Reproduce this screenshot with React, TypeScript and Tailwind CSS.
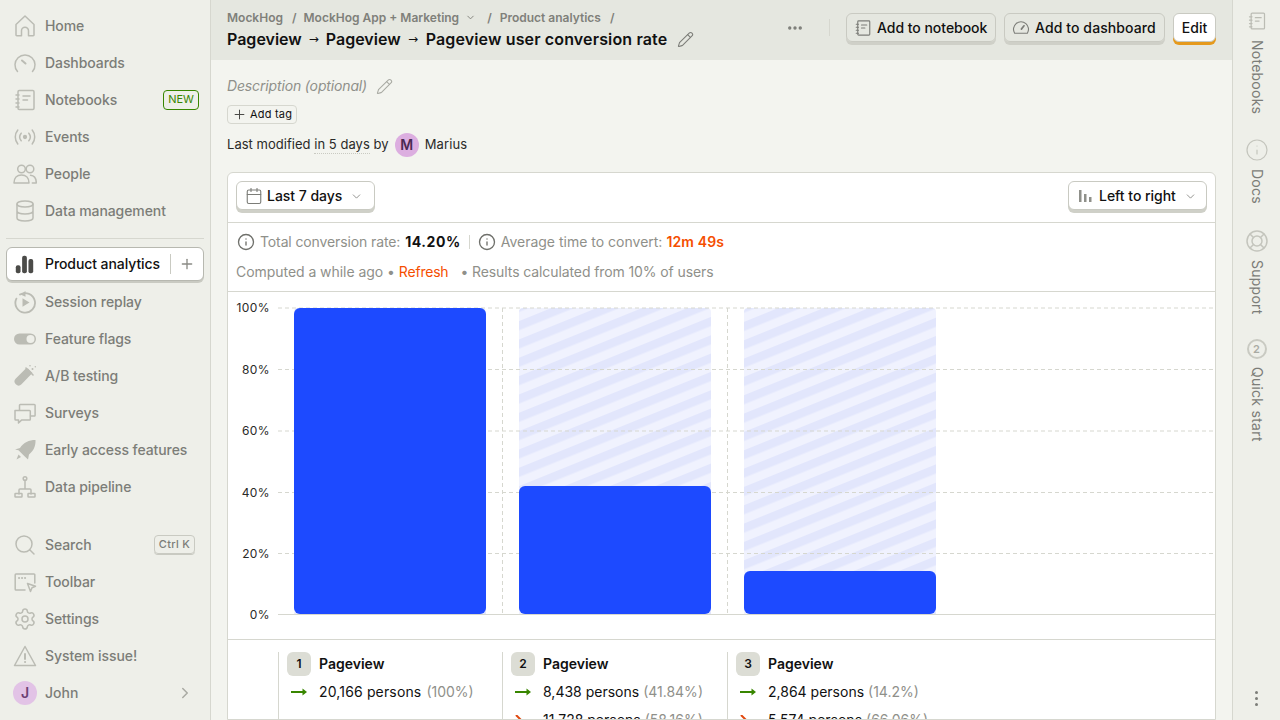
import * as React from "react";
import { ChevronDown, ChevronRight, Plus, Settings, Search, Pencil, Calendar, Info, MoreHorizontal } from "lucide-react";

type IconProps = { className?: string };

function Svg({ className, children }: IconProps & { children: React.ReactNode }) {
  return (
    <svg
      viewBox="0 0 24 24"
      fill="none"
      stroke="currentColor"
      strokeWidth={1.5}
      strokeLinecap="round"
      strokeLinejoin="round"
      className={className}
    >
      {children}
    </svg>
  );
}

const HomeIcon = (p: IconProps) => (
  <Svg {...p}>
    <path d="M3 21V10.500L12 2l9 8.500V21a.8.8 0 0 1-.8.8H15.500v-5a3.500 3.500 0 0 0-7 0v5H3.800A.8.8 0 0 1 3 21z" />
  </Svg>
);
const GaugeIcon = (p: IconProps) => (
  <Svg {...p}>
    <path d="M4.500 20.500a10 10 0 1 1 15 0" />
    <path d="M9 9.500l3.500 3" strokeWidth={2} />
  </Svg>
);
const WideGaugeIcon = (p: IconProps) => (
  <Svg {...p}>
    <path d="M3.500 19a10 10 0 1 1 17 0z" />
    <path d="M16 9l-3.500 4.500" strokeWidth={2.200} />
  </Svg>
);
const NotebookIcon = (p: IconProps) => (
  <Svg {...p}>
    <rect x="5" y="2.500" width="16" height="19" rx="1.200" />
    <path d="M3 7h3M3 11h3M3 15h3M3 19h3M10 8h7M10 12h4.500" />
  </Svg>
);
const EventsIcon = (p: IconProps) => (
  <Svg {...p}>
    <circle cx="12" cy="12" r="1.400" fill="currentColor" />
    <path d="M8.200 8.200a6 6 0 0 0 0 7.600M15.800 8.200a6 6 0 0 1 0 7.600M4.800 5a11 11 0 0 0 0 14M19.200 5a11 11 0 0 1 0 14" />
  </Svg>
);
const PeopleIcon = (p: IconProps) => (
  <Svg {...p}>
    <circle cx="8.500" cy="7" r="3.800" />
    <circle cx="17" cy="7" r="3.800" />
    <path d="M1 21c0-5 3-8 7.500-8s7.500 3 7.500 8H1z" />
    <path d="M17.500 13.200c3.500.3 5.800 3 5.800 7.800h-4" />
  </Svg>
);
const DatabaseIcon = (p: IconProps) => (
  <Svg {...p}>
    <ellipse cx="12" cy="5" rx="8" ry="3" />
    <path d="M4 5v14c0 1.700 3.600 3 8 3s8-1.300 8-3V5M4 12c0 1.700 3.600 3 8 3s8-1.300 8-3" />
  </Svg>
);
const BarsIcon = ({ className }: IconProps) => (
  <svg viewBox="0 0 24 24" fill="currentColor" className={className}>
    <rect x="1" y="13" width="6" height="10" rx="2.500" />
    <rect x="9" y="1" width="6" height="22" rx="2.500" />
    <rect x="17" y="5" width="6" height="18" rx="2.500" />
  </svg>
);
const ReplayIcon = ({ className }: IconProps) => (
  <svg viewBox="0 0 24 24" className={className}>
    <path d="M7 4.600a9.800 9.800 0 1 1-3.600 4" fill="none" stroke="currentColor" strokeWidth="1.800" strokeLinecap="round" />
    <path d="M12.500 1l-5 3.400 5 2.400z" fill="currentColor" />
    <path d="M9.500 8.200l7 4.300-7 4.300z" fill="currentColor" />
  </svg>
);
const ToggleIcon = ({ className }: IconProps) => (
  <svg viewBox="0 0 24 24" className={className}>
    <rect x="1" y="6.500" width="22" height="11" rx="5.500" fill="currentColor" />
    <circle cx="17.500" cy="12" r="4" fill="#eeefe9" />
  </svg>
);
const TubeIcon = ({ className }: IconProps) => (
  <svg viewBox="0 0 24 24" fill="currentColor" className={className}>
    <path d="M15 4.500l4.500 4.500-1.300 1.300-9.700 9.900a4 4 0 0 1-5.700-5.700l9.800-9.800z" />
    <path d="M13 4l7 7" stroke="currentColor" strokeWidth="1.600" strokeLinecap="round" />
    <circle cx="19.500" cy="5" r="1" />
    <circle cx="17" cy="1.800" r=".8" />
    <circle cx="22.300" cy="2.800" r=".7" />
  </svg>
);
const SurveysIcon = (p: IconProps) => (
  <Svg {...p}>
    <path d="M2 9.500h14.500a.8.8 0 0 1 .8.800v8a.8.8 0 0 1-.8.800H8.500L5.500 22v-2.900H2.800a.8.8 0 0 1-.8-.8z" />
    <path d="M6.500 9V4.300a.8.8 0 0 1 .8-.8h14a.8.8 0 0 1 .8.800v10a.8.8 0 0 1-.8.800h-3.800" />
  </Svg>
);
const RocketIcon = ({ className }: IconProps) => (
  <svg viewBox="0 0 24 24" fill="currentColor" className={className}>
    <path d="M22.500 2c.3 6-2 11-6.500 14.500l-1 5-3.500-3.200-6-6L2 11.500l5-1.500C10.500 4.500 16 2 22.500 2z" />
    <path d="M5.500 16.500l2.500 2.500-4.500 2.500z" />
  </svg>
);
const PipelineIcon = (p: IconProps) => (
  <Svg {...p}>
    <circle cx="12" cy="3.500" r="1.800" />
    <path d="M12 5.500v8M6 19v-4a1 1 0 0 1 1-1h10a1 1 0 0 1 1 1v4" />
    <rect x="2" y="18.500" width="7" height="3.500" rx=".5" />
    <rect x="15" y="18.500" width="7" height="3.500" rx=".5" />
  </Svg>
);
const ToolbarIcon = (p: IconProps) => (
  <Svg {...p}>
    <path d="M12 20H3a.8.8 0 0 1-.8-.8V4.800A.8.8 0 0 1 3 4h18a.8.8 0 0 1 .8.800V13" />
    <path d="M6 8h.1M9 8h.1M12 8h.1" strokeWidth={2} />
    <path d="M14.500 13.500l8 2.800-3.500 1.500-1.500 3.700z" />
  </Svg>
);
const WarningIcon = (p: IconProps) => (
  <Svg {...p}>
    <path d="M12 2.500L22.500 21.500h-21z" />
    <path d="M12 10v5" strokeWidth={2} />
    <path d="M12 18h.1" strokeWidth={2} />
  </Svg>
);
const SupportIcon = (p: IconProps) => (
  <Svg {...p}>
    <circle cx="12" cy="12" r="10" />
    <circle cx="12" cy="12" r="5" />
    <path d="M5 5l3.500 3.500M19 5l-3.500 3.500M5 19l3.500-3.500M19 19l-3.500-3.500" />
  </Svg>
);

function NavItem({
  icon: Icon,
  label,
  right,
}: {
  icon: React.ComponentType<IconProps>;
  label: string;
  right?: React.ReactNode;
}) {
  return (
    <div className="flex h-[37px] items-center pl-[13px] pr-[11px]">
      <span className="flex w-[24px] shrink-0 items-center justify-center text-[#bbbcb4]">
        <Icon className="h-[24px] w-[24px] shrink-0" />
      </span>
      <span className="ml-[8px] flex-1 text-sm font-[450] tracking-[-.08px] text-[#7c7d78]">{label}</span>
      {right}
    </div>
  );
}

function Sidebar() {
  return (
    <aside className="flex h-full w-[211px] shrink-0 flex-col border-r border-[#d6d7cf] bg-[#eeefe9] pt-[7px]">
      <NavItem icon={HomeIcon} label="Home" />
      <NavItem icon={GaugeIcon} label="Dashboards" />
      <NavItem
        icon={NotebookIcon}
        label="Notebooks"
        right={
          <span className="flex h-[20px] w-[36px] items-center justify-center rounded border border-[#388600] text-[11px] text-[#388600]">
            NEW
          </span>
        }
      />
      <NavItem icon={EventsIcon} label="Events" />
      <NavItem icon={PeopleIcon} label="People" />
      <NavItem icon={DatabaseIcon} label="Data management" />
      <div className="mx-[6px] mt-[9px] mb-[8px] border-t border-[#d6d7cf]" />
      <div className="mx-[6px] flex h-[34px] items-center rounded-md border border-[#b7b8b0] bg-white pl-[8px] shadow-[0_2px_0_#c9cac2]">
        <BarsIcon className="h-[19px] w-[19px] text-[#4b4b48]" />
        <span className="ml-[11px] text-sm font-[450] tracking-[-.08px] text-[#111]">Product analytics</span>
        <span className="ml-[10px] h-[20px] border-l border-[#c9cac2]" />
        <Plus className="ml-[8px] h-[16px] w-[16px] text-[#8a8b85]" strokeWidth={2} />
      </div>
      <div className="h-[2px]" />
      <NavItem icon={ReplayIcon} label="Session replay" />
      <NavItem icon={ToggleIcon} label="Feature flags" />
      <NavItem icon={TubeIcon} label="A/B testing" />
      <NavItem icon={SurveysIcon} label="Surveys" />
      <NavItem icon={RocketIcon} label="Early access features" />
      <NavItem icon={PipelineIcon} label="Data pipeline" />
      <div className="h-[21px]" />
      <NavItem
        icon={(p) => <Search {...p} strokeWidth={1.500} />}
        label="Search"
        right={
          <span className="mr-[4px] flex h-[19px] items-center rounded border border-[#c9cac2] px-[4px] text-[11px] font-medium tracking-wide text-[#7c7d78] shadow-[0_1px_0_#c9cac2]">
            Ctrl K
          </span>
        }
      />
      <NavItem icon={ToolbarIcon} label="Toolbar" />
      <NavItem icon={(p) => <Settings {...p} strokeWidth={1.500} />} label="Settings" />
      <NavItem icon={WarningIcon} label="System issue!" />
      <div className="flex h-[37px] items-center pl-[13px] pr-[16px]">
        <span className="flex h-[24px] w-[24px] items-center justify-center rounded-full bg-[#e2c3e6] text-sm font-semibold text-[#6c3f73]">
          J
        </span>
        <span className="ml-[8px] flex-1 text-sm font-[450] text-[#7c7d78]">John</span>
        <ChevronRight className="h-[18px] w-[18px] text-[#a9aaa3]" strokeWidth={2} />
      </div>
    </aside>
  );
}

function RaisedButton({ children, className = "" }: { children: React.ReactNode; className?: string }) {
  return (
    <div
      className={`flex h-[29px] items-center rounded-md border border-[#c9cac2] pt-[1px] text-sm font-medium tracking-[-.03px] text-[#111] shadow-[0_3px_0_#cfd0c8] ${className}`}
    >
      {children}
    </div>
  );
}

function Header() {
  return (
    <header className="flex h-[60px] shrink-0 items-start bg-[#e5e7e0] pl-[16px] pr-[16px]">
      <div className="flex-1 pt-[10px]">
        <div className="flex h-[15px] items-center text-xs font-semibold text-[#7f807a]">
          <span>MockHog</span>
          <span className="ml-[9px] mr-[7px]">/</span>
          <span>MockHog App + Marketing</span>
          <ChevronDown className="ml-[6px] h-[11px] w-[11px]" strokeWidth={2} />
          <span className="ml-[11px] mr-[8px]">/</span>
          <span>Product analytics</span>
          <span className="ml-[9px]">/</span>
        </div>
        <div className="mt-[2px] flex h-[24px] items-center text-base font-semibold text-[#111]">
          Pageview
          <span className="mx-[7px] font-['DejaVu_Sans',sans-serif] text-[12px] font-normal">→</span>
          Pageview
          <span className="mx-[7.500px] font-['DejaVu_Sans',sans-serif] text-[12px] font-normal">→</span>
          <span className="tracking-[.14px]">Pageview user conversion rate</span>
          <Pencil className="ml-[10px] h-[17px] w-[17px] text-[#7c7d78]" strokeWidth={1.500} />
        </div>
      </div>
      <div className="flex items-center pt-[13px]">
        <MoreHorizontal className="h-[18px] w-[18px] text-[#7c7d78]" strokeWidth={2.500} />
        <span className="ml-[25px] mr-[16px] h-[17px] border-l border-[#d6d7cf]" />
        <RaisedButton className="w-[150px] pl-[7px]">
          <NotebookIcon className="mr-[5px] h-[18px] w-[18px] text-[#7c7d78]" />
          Add to notebook
        </RaisedButton>
        <RaisedButton className="ml-[8px] w-[161px] pl-[7px]">
          <WideGaugeIcon className="mr-[5px] h-[18px] w-[18px] text-[#7c7d78]" />
          <span className="tracking-[.1px]">Add to dashboard</span>
        </RaisedButton>
        <RaisedButton className="ml-[8px] w-[43px] justify-center border-[#b87d1e] bg-white shadow-[0_3px_0_#e59a1d]">
          Edit
        </RaisedButton>
      </div>
    </header>
  );
}

const ticks = [
  { label: "100%", y: 16 },
  { label: "80%", y: 77.500 },
  { label: "60%", y: 139 },
  { label: "40%", y: 200.500 },
  { label: "20%", y: 261.500 },
];

const bars = [
  { x: 66, top: 16 },
  { x: 291, top: 194 },
  { x: 516, top: 279 },
];

function FunnelChart() {
  return (
    <svg width="987" height="347" className="block">
      <defs>
        <pattern id="stripes" width="17" height="17" patternUnits="userSpaceOnUse" patternTransform="rotate(-22)">
          <rect width="17" height="17" fill="#f0f2fe" />
          <rect width="17" height="8.500" fill="#e2e6fc" />
        </pattern>
      </defs>
      {bars.map((b) => (
        <path key={b.x} d={`M${b.x} 322V20a4 4 0 0 1 4-4h184a4 4 0 0 1 4 4V322z`} fill="url(#stripes)" />
      ))}
      {ticks.map((t) => (
        <line key={t.label} x1="50" x2="987" y1={t.y} y2={t.y} stroke="#d6d7cf" strokeDasharray="4 3" />
      ))}
      <line x1="50" x2="987" y1="322.500" y2="322.500" stroke="#d6d7cf" />
      <line x1="274.500" x2="274.500" y1="16" y2="322" stroke="#d6d7cf" strokeDasharray="4 3" />
      <line x1="499.500" x2="499.500" y1="16" y2="322" stroke="#d6d7cf" strokeDasharray="4 3" />
      {bars.map((b) => (
        <path
          key={b.x}
          d={`M${b.x + 6} 322a6 6 0 0 1-6-6V${b.top + 6}a6 6 0 0 1 6-6h180a6 6 0 0 1 6 6V316a6 6 0 0 1-6 6z`}
          fill="#1d4aff"
        />
      ))}
      <g fill="#2a2a28" fontSize="12" textAnchor="end" letterSpacing=".4">
        {ticks.map((t) => (
          <text key={t.label} x="42" y={t.y + 4}>
            {t.label}
          </text>
        ))}
        <text x="42" y="327">
          0%
        </text>
      </g>
    </svg>
  );
}

function StepArrow({ down }: { down?: boolean }) {
  return (
    <svg viewBox="0 0 16 10" className="h-[10px] w-[16px]">
      {down ? (
        <path d="M1 0l9 9" stroke="#e1480f" strokeWidth="2" fill="none" />
      ) : (
        <>
          <path d="M0 5h13" stroke="#388600" strokeWidth="2" fill="none" />
          <path d="M11.500 1.500L16 5l-4.500 3.500z" fill="#388600" />
        </>
      )}
    </svg>
  );
}

function LegendStep({
  n,
  people,
  pct,
  drop,
  dropPct,
  width,
}: {
  n: number;
  people: string;
  pct: string;
  drop?: string;
  dropPct?: string;
  width: string;
}) {
  return (
    <div className={`${width} h-[120px] shrink-0 border-l border-[#d6d7cf] pl-[8px]`}>
      <div className="flex h-[24px] items-center">
        <span className="flex h-[24px] w-[24px] items-center justify-center rounded-md bg-[#dcddd5] text-xs font-semibold text-[#111]">
          {n}
        </span>
        <span className="ml-[8px] text-sm font-semibold text-[#111]">Pageview</span>
      </div>
      <div className="mt-[2px] flex h-[28px] items-center">
        <span className="ml-[4px] mr-[12px] flex w-[16px] justify-center">
          <StepArrow />
        </span>
        <span className={`text-sm text-[#111] ${drop ? "" : "tracking-[.15px]"}`}>{people} persons</span>
        <span className={`text-sm text-[#8f908a] ${drop ? "ml-[4px]" : "ml-[5px]"}`}>({pct})</span>
      </div>
      {drop ? (
        <div className="flex h-[28px] items-center">
          <span className="ml-[4px] mr-[12px] flex w-[16px] justify-center">
            <StepArrow down />
          </span>
          <span className="text-sm text-[#111]">{drop} persons</span>
          <span className="ml-[4px] text-sm text-[#8f908a]">({dropPct})</span>
        </div>
      ) : null}
    </div>
  );
}

function InsightCard() {
  return (
    <section className="mt-[15px] w-[989px] overflow-hidden rounded-t-md border border-[#d6d7cf] bg-white">
      <div className="flex h-[50px] items-center justify-between border-b border-[#d6d7cf] pl-[8px] pr-[8px] pb-[4px]">
        <RaisedButton className="w-[139px] bg-white pl-[8px]">
          <Calendar className="mr-[4px] h-[18px] w-[18px] text-[#7c7d78]" strokeWidth={1.500} />
          Last 7 days
          <ChevronDown className="ml-[8px] h-[13px] w-[13px] text-[#7c7d78]" strokeWidth={1.500} />
        </RaisedButton>
        <RaisedButton className="w-[139px] bg-white pl-[9px]">
          <svg viewBox="0 0 14 14" className="mr-[7px] h-[14px] w-[14px] text-[#8f908a]" fill="currentColor">
            <rect x="1" y="1" width="2.500" height="12" />
            <rect x="6" y="5" width="2.500" height="8" />
            <rect x="11" y="8" width="2.500" height="5" />
          </svg>
          Left to right
          <ChevronDown className="ml-[8px] h-[13px] w-[13px] text-[#7c7d78]" strokeWidth={1.500} />
        </RaisedButton>
      </div>
      <div className="h-[69px] border-b border-[#d6d7cf] pl-[8px] pt-[9px] text-sm">
        <div className="flex h-[20px] items-center text-[#8f908a]">
          <Info className="ml-[1px] mr-[5px] h-[18px] w-[18px] text-[#6f706b]" strokeWidth={1.800} />
          <span className="tracking-[-.12px]">Total conversion rate:</span>
          <span className="ml-[5px] font-bold tracking-[.55px] text-[#111]">14.20%</span>
          <span className="mx-[8px] h-[14px] border-l border-[#d6d7cf]" />
          <Info className="mr-[5px] h-[18px] w-[18px] text-[#6f706b]" strokeWidth={1.800} />
          <span>Average time to convert:</span>
          <span className="ml-[4px] font-semibold tracking-[.15px] text-[#f54e00]">12m 49s</span>
        </div>
        <div className="mt-[10px] flex h-[20px] items-center text-[#8f908a]">
          <span className="tracking-[-.05px]">Computed a while ago •</span>
          <span className="ml-[4px] tracking-[-.2px] text-[#f54e00]">Refresh</span>
          <span className="ml-[12px] tracking-[-.1px]">• Results calculated from 10% of users</span>
        </div>
      </div>
      <FunnelChart />
      <div className="flex h-[80px] border-t border-[#d6d7cf] pl-[50px] pt-[12px]">
        <LegendStep width="w-[224px]" n={1} people="20,166" pct="100%" />
        <LegendStep width="w-[225px]" n={2} people="8,438" pct="41.84%" drop="11,728" dropPct="58.16%" />
        <LegendStep width="w-[225px]" n={3} people="2,864" pct="14.2%" drop="5,574" dropPct="66.06%" />
      </div>
    </section>
  );
}

function RailLabel({ children, gap }: { children: React.ReactNode; gap: string }) {
  return (
    <span className={`${gap} text-sm font-normal tracking-[.25px] text-[#7c7d78] [writing-mode:vertical-rl]`}>
      {children}
    </span>
  );
}

function RightRail() {
  return (
    <aside className="relative flex h-full w-[48px] shrink-0 flex-col items-center border-l border-[#d6d7cf] bg-[#eeefe9] pt-[11px]">
      <NotebookIcon className="h-[20px] w-[20px] text-[#bbbcb4]" />
      <RailLabel gap="mt-[9px]">Notebooks</RailLabel>
      <Info className="mt-[24px] mb-[-2px] h-[24px] w-[24px] text-[#c4c5bd]" strokeWidth={1.200} />
      <RailLabel gap="mt-[9px]">Docs</RailLabel>
      <SupportIcon className="mt-[25px] mb-[-2px] h-[24px] w-[24px] text-[#c4c5bd]" />
      <RailLabel gap="mt-[9px]">Support</RailLabel>
      <span className="mt-[24px] flex h-[20px] w-[20px] items-center justify-center rounded-full border-2 border-[#c9cac2] text-[11px] font-semibold text-[#a9aaa3]">
        2
      </span>
      <RailLabel gap="mt-[8px]">Quick start</RailLabel>
      <div className="absolute bottom-[14px] flex flex-col gap-[3px]">
        <span className="h-[3px] w-[3px] rounded-full bg-[#7c7d78]" />
        <span className="h-[3px] w-[3px] rounded-full bg-[#7c7d78]" />
        <span className="h-[3px] w-[3px] rounded-full bg-[#7c7d78]" />
      </div>
    </aside>
  );
}

export default function App() {
  return (
    <div className="flex h-[720px] w-[1280px] overflow-hidden bg-[#f3f4ef] font-['Inter',sans-serif] text-[#111]">
      <Sidebar />
      <main className="flex h-full min-w-0 flex-1 flex-col overflow-hidden">
        <Header />
        <div className="pl-[16px]">
          <div className="mt-[15px] flex h-[22px] items-center text-sm italic tracking-[-.15px] text-[#8f908a]">
            Description (optional)
            <Pencil className="ml-[9px] h-[17px] w-[17px] not-italic text-[#a9aaa3]" strokeWidth={1.500} />
          </div>
          <div className="mt-[8px] flex h-[19px] w-[70px] items-center rounded border border-[#d6d7cf] pl-[4px] text-[11px] tracking-[.2px] text-[#111]">
            <Plus className="mr-[3px] h-[15px] w-[15px] text-[#4b4b48]" strokeWidth={1.600} />
            Add tag
          </div>
          <div className="mt-[9px] flex h-[24px] items-center text-[13px] tracking-[.03px] text-[#2a2a28]">
            Last modified&nbsp;
            <span className="border-b border-dotted border-[#c9cac2] leading-[17px]">in 5 days</span>
            &nbsp;by
            <span className="ml-[6px] flex h-[24px] w-[24px] items-center justify-center rounded-full bg-[#dcaee0] text-sm font-semibold text-[#4a2a52]">
              M
            </span>
            <span className="ml-[6px] tracking-[.15px]">Marius</span>
          </div>
          <InsightCard />
        </div>
      </main>
      <RightRail />
    </div>
  );
}
